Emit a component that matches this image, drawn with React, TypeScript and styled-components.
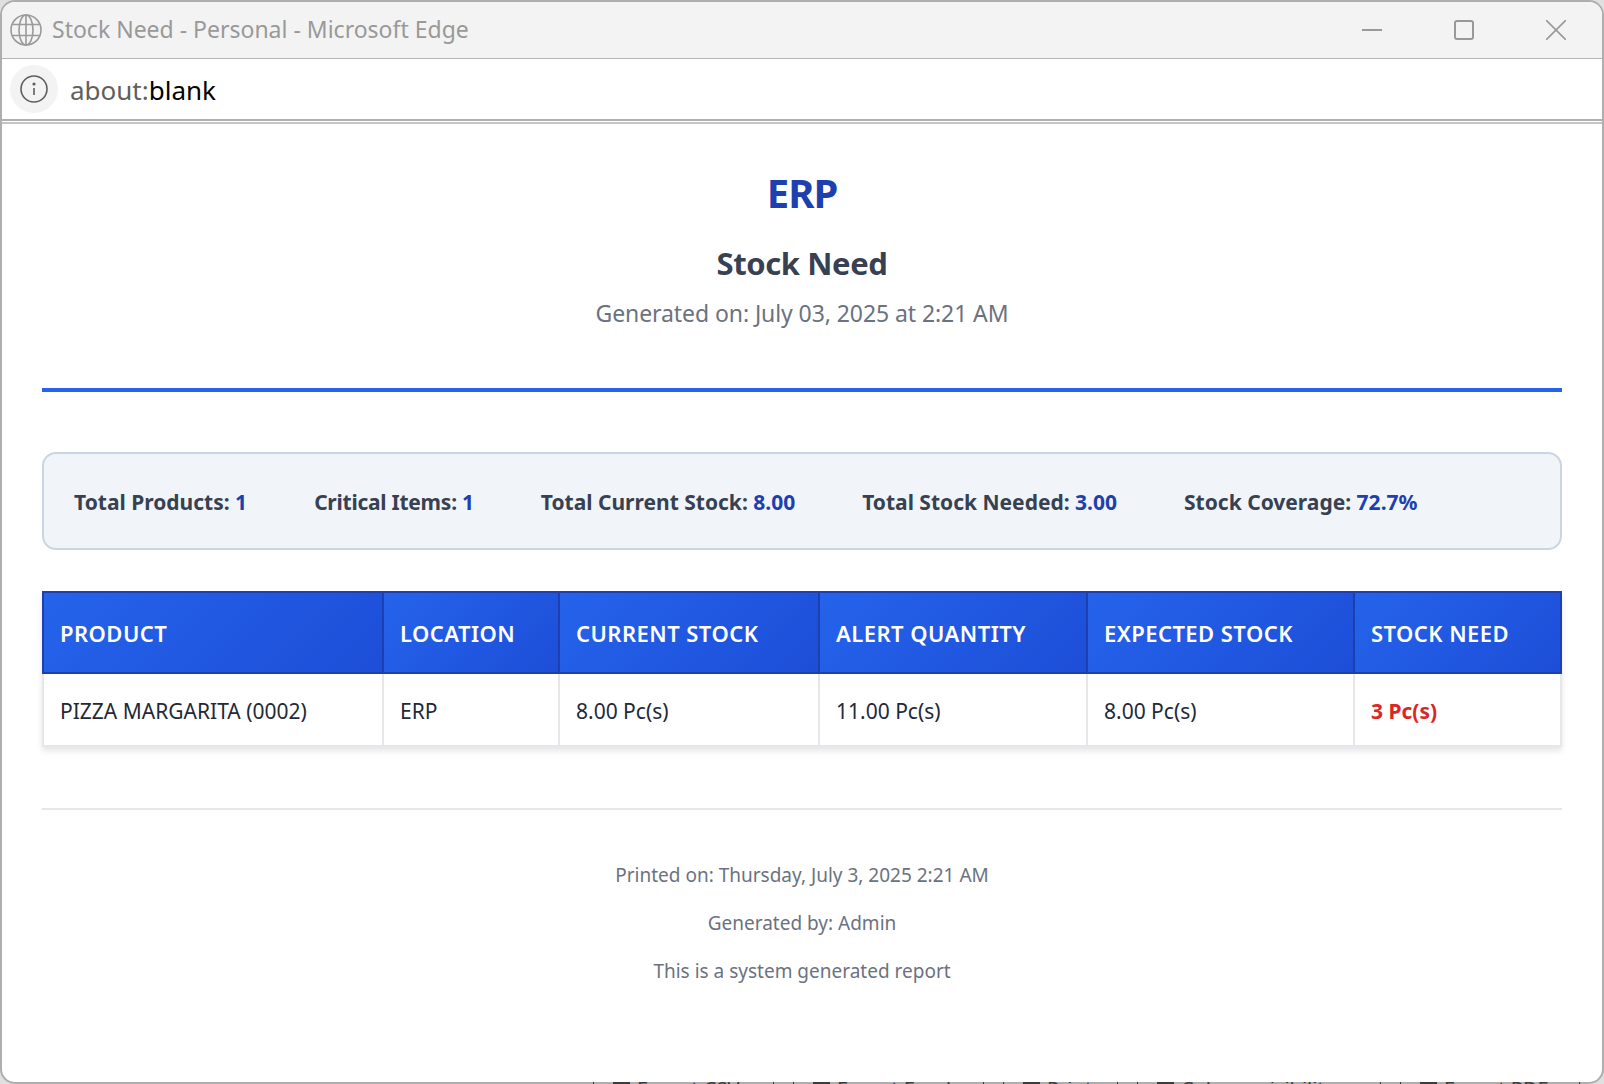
import React from "react";
import styled, { createGlobalStyle } from "styled-components";

const Global = createGlobalStyle`
  html, body { margin: 0; padding: 0; background: #fff; }
  body { width: 1604px; height: 1084px; overflow: hidden; font-family: "Noto Sans", "Open Sans", sans-serif; }
`;

const Stage = styled.div`
  position: relative;
  width: 1604px;
  height: 1084px;
  overflow: hidden;
  background: #e0e0e0;
`;

const Window = styled.div`
  position: relative;
  z-index: 1;
  width: 1604px;
  height: 1084px;
  box-sizing: border-box;
  border: 2px solid rgba(100, 100, 100, 0.4);
  border-radius: 15px;
  background: #fff;
  background-clip: padding-box;
  overflow: hidden;
  display: flex;
  flex-direction: column;
`;

const TitleBar = styled.div`
  height: 56px;
  flex: none;
  box-sizing: content-box;
  background: #f3f3f3;
  display: flex;
  align-items: center;
  padding-left: 8px;
  border-bottom: 1px solid #b5b5b5;
`;

const TitleText = styled.div`
  margin-left: 10px;
  margin-top: -2px;
  font-size: 23px;
  color: #999;
  flex: 1;
`;

const WinButton = styled.div`
  width: 92px;
  height: 56px;
  display: flex;
  align-items: center;
  justify-content: center;
  color: #999;
`;

const AddressBar = styled.div`
  height: 60px;
  flex: none;
  display: flex;
  align-items: center;
  padding-left: 8px;
  border-bottom: 2px solid #b0b0b0;
`;

const InfoCircle = styled.div`
  width: 48px;
  height: 48px;
  border-radius: 50%;
  background: #f3f3f3;
  display: flex;
  align-items: center;
  justify-content: center;
`;

const Url = styled.div`
  margin-left: 12px;
  margin-top: 1px;
  font-size: 26px;
  color: #000;
`;

const UrlScheme = styled.span`
  color: #5f5f5f;
`;

const Content = styled.div`
  flex: 1;
  padding: 41px 40px 0;
  border-top: 2px solid #c4c4c4;
  margin-top: 1px;
`;

const Header = styled.header`
  text-align: center;
  padding-bottom: 59px;
  border-bottom: 4px solid #2563eb;
  margin-bottom: 60px;
`;

const Brand = styled.h1`
  margin: 0 0 22px;
  font-size: 40px;
  line-height: 56px;
  letter-spacing: -1px;
  font-weight: 700;
  color: #1e40af;
`;

const ReportTitle = styled.h2`
  margin: 0 0 14px;
  font-size: 31px;
  line-height: 40px;
  letter-spacing: -0.4px;
  font-weight: 700;
  color: #374151;
`;

const Generated = styled.p`
  margin: 0;
  font-size: 23px;
  line-height: 32px;
  letter-spacing: -0.08px;
  color: #6b7280;
`;

const Stats = styled.section`
  box-sizing: border-box;
  height: 98px;
  display: flex;
  align-items: center;
  gap: 67px;
  padding: 2px 30px 0;
  background: #f1f5f9;
  border: 2px solid #cbd5e1;
  border-radius: 14px;
  margin-bottom: 41px;
`;

const Stat = styled.div<{ $tracking: number }>`
  font-size: 21px;
  font-weight: 700;
  letter-spacing: ${(p) => p.$tracking}px;
  color: #374151;
`;

const StatValue = styled.span`
  color: #1e40af;
  font-weight: 700;
`;

const Table = styled.table`
  width: 1518px;
  table-layout: fixed;
  border-collapse: collapse;
  box-shadow: 0 4px 6px rgba(0, 0, 0, 0.1);
`;

const Th = styled.th`
  height: 81px;
  box-sizing: border-box;
  padding: 0 16px;
  text-align: left;
  font-size: 22px;
  font-weight: 600;
  letter-spacing: 0.45px;
  color: #fff;
  text-transform: uppercase;
  background: linear-gradient(135deg, #2563eb, #1d4ed8);
  border: 2px solid #1e40af;
`;

const Td = styled.td<{ $need?: boolean }>`
  height: 73px;
  box-sizing: border-box;
  padding: 2px 16px 0;
  font-size: 21px;
  color: ${(p) => (p.$need ? "#dc2626" : "#1f2937")};
  font-weight: ${(p) => (p.$need ? 700 : 400)};
  border: 2px solid #e5e7eb;
`;

const Footer = styled.footer`
  margin-top: 61px;
  padding-top: 52px;
  border-top: 2px solid #e5e7eb;
  text-align: center;
  font-size: 19px;
  color: #6b7280;
`;

const FooterLine = styled.p`
  margin: 0 0 22px;
  line-height: 26px;
`;

const Behind = styled.div`
  position: absolute;
  left: 593px;
  bottom: -25px;
  display: flex;
  gap: 19px;
  font-size: 20px;
  line-height: 40px;
  color: #222;
  white-space: nowrap;
`;

const BehindButton = styled.div<{ $width: number }>`
  box-sizing: border-box;
  width: ${(p) => p.$width}px;
  height: 40px;
  padding-left: 19px;
  display: flex;
  align-items: flex-start;
  gap: 7px;
  border-left: 1px solid #222;
  border-right: 1px solid #222;
`;

const BehindIcon = styled.span`
  width: 17px;
  height: 16px;
  margin-top: 11px;
  background: #222;
`;

const columns: [string, number][] = [
  ["Product", 340],
  ["Location", 176],
  ["Current Stock", 260],
  ["Alert Quantity", 268],
  ["Expected Stock", 267],
  ["Stock Need", 207],
];

const stats: [string, string, number][] = [
  ["Total Products:", "1", 0],
  ["Critical Items:", "1", -0.25],
  ["Total Current Stock:", "8.00", 0],
  ["Total Stock Needed:", "3.00", 0],
  ["Stock Coverage:", "72.7%", 0],
];

const behind: [string, number][] = [
  ["Export CSV", 181],
  ["Export Excel", 191],
  ["Print", 115],
  ["Column visibility", 244],
  ["Export PDF", 180],
];

export default function App() {
  return (
    <Stage>
      <Global />
      <Behind>
        {behind.map(([label, width]) => (
          <BehindButton key={label} $width={width}>
            <BehindIcon />
            <span>{label}</span>
          </BehindButton>
        ))}
      </Behind>
      <Window>
        <TitleBar>
          <svg width="32" height="32" viewBox="0 0 32 32" fill="none" stroke="#9a9a9a" strokeWidth="1.6">
            <circle cx="16" cy="16" r="15" />
            <ellipse cx="16" cy="16" rx="7" ry="15" />
            <path d="M16 1v30M2.5 10.5h27M2.5 21.5h27" />
          </svg>
          <TitleText>Stock Need - Personal - Microsoft Edge</TitleText>
          <WinButton>
            <svg width="20" height="20" viewBox="0 0 20 20" stroke="#999" strokeWidth="2" fill="none"><path d="M0 10h20" /></svg>
          </WinButton>
          <WinButton>
            <svg width="20" height="20" viewBox="0 0 20 20" stroke="#999" strokeWidth="2" fill="none"><rect x="1" y="1" width="18" height="18" rx="2" /></svg>
          </WinButton>
          <WinButton>
            <svg width="20" height="20" viewBox="0 0 20 20" stroke="#999" strokeWidth="1.6" fill="none"><path d="M0 0l20 20M20 0L0 20" /></svg>
          </WinButton>
        </TitleBar>
        <AddressBar>
          <InfoCircle>
            <svg width="28" height="28" viewBox="0 0 28 28" fill="none" stroke="#5f5f5f" strokeWidth="1.6">
              <circle cx="14" cy="14" r="13" />
              <path d="M14 13v7" />
              <circle cx="14" cy="9" r="0.8" fill="#5f5f5f" />
            </svg>
          </InfoCircle>
          <Url><UrlScheme>about:</UrlScheme>blank</Url>
        </AddressBar>
        <Content>
          <Header>
            <Brand>ERP</Brand>
            <ReportTitle>Stock Need</ReportTitle>
            <Generated>Generated on: July 03, 2025 at 2:21 AM</Generated>
          </Header>
          <Stats>
            {stats.map(([label, value, tracking]) => (
              <Stat key={label} $tracking={tracking}>{label} <StatValue>{value}</StatValue></Stat>
            ))}
          </Stats>
          <Table>
            <colgroup>
              {columns.map(([name, width]) => <col key={name} width={width} />)}
            </colgroup>
            <thead>
              <tr>{columns.map(([name]) => <Th key={name}>{name}</Th>)}</tr>
            </thead>
            <tbody>
              <tr>
                <Td>PIZZA MARGARITA (0002)</Td>
                <Td>ERP</Td>
                <Td>8.00 Pc(s)</Td>
                <Td>11.00 Pc(s)</Td>
                <Td>8.00 Pc(s)</Td>
                <Td $need>3 Pc(s)</Td>
              </tr>
            </tbody>
          </Table>
          <Footer>
            <FooterLine>Printed on: Thursday, July 3, 2025 2:21 AM</FooterLine>
            <FooterLine>Generated by: Admin</FooterLine>
            <FooterLine>This is a system generated report</FooterLine>
          </Footer>
        </Content>
      </Window>
    </Stage>
  );
}
